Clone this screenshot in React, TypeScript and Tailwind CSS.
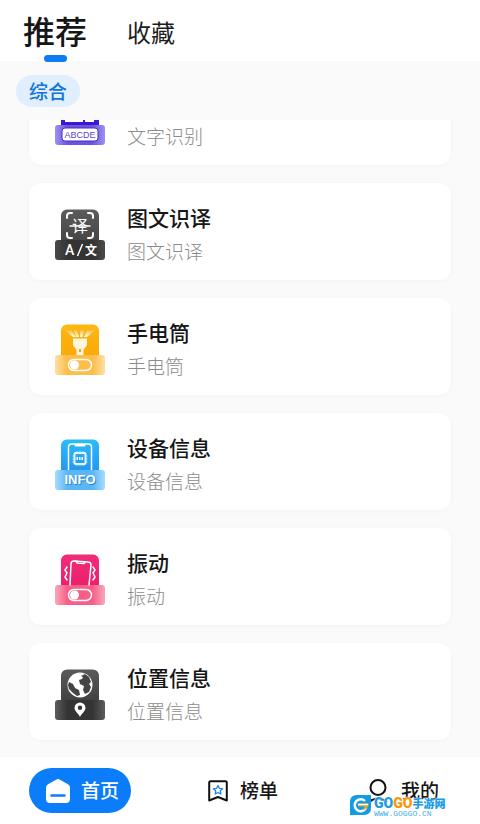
import type { ReactNode } from "react";

type Tool = {
  id: string;
  name: string;
  description: string;
  icon: ReactNode;
};

type IconBaseProps = {
  id: string;
  top: [string, string];
  edge: string;
  middle: string;
  children: ReactNode;
};

const IconBase = ({ id, top, edge, middle, children }: IconBaseProps) => (
  <svg viewBox="0 -1 50 54" className="h-[54px] w-[50px] shrink-0" aria-hidden="true">
    <defs>
      <linearGradient id={`${id}-top`} x1="0" y1="0" x2="0" y2="1">
        <stop offset="0" stopColor={top[0]} />
        <stop offset="1" stopColor={top[1]} />
      </linearGradient>
      <linearGradient id={`${id}-band`} x1="0" y1="0" x2="1" y2="0">
        <stop offset="0" stopColor={edge} />
        <stop offset="0.25" stopColor={middle} />
        <stop offset="0.75" stopColor={middle} />
        <stop offset="1" stopColor={edge} />
      </linearGradient>
    </defs>
    <path
      d="M6 34V7.500a6 6 0 0 1 6-6h26a6 6 0 0 1 6 6V34z"
      fill={`url(#${id}-top)`}
    />
    <rect y="32" width="50" height="20" rx="3" fill={`url(#${id}-band)`} />
    {children}
  </svg>
);

const SwitchGlyph = () => (
  <g>
    <rect x="13.500" y="36.500" width="23" height="11" rx="5.500" fill="none" stroke="#fff" strokeWidth="1.500" />
    <circle cx="19.500" cy="42" r="4.500" fill="#fff" />
  </g>
);

const TextScanIcon = () => (
  <IconBase id="scan" top={["#5b3cf0", "#3a12cf"]} edge="#9e92f0" middle="#6a55e0">
    <path d="M10 20h18v9H10zM30 20h9v9h-9z" fill="#fff" />
    <rect x="7" y="35" width="36" height="13" rx="3" fill="#fff" stroke="#4630bd" />
    <text x="25" y="45" textAnchor="middle" fontSize="9" className="fill-[#5b48cf] font-['Liberation_Sans',sans-serif]">
      ABCDE
    </text>
  </IconBase>
);

const TranslateIcon = () => (
  <IconBase id="translate" top={["#5c5c5c", "#444444"]} edge="#4a4a4a" middle="#343434">
    <g fill="none" stroke="#fff" strokeWidth="2" strokeLinecap="round">
      <path d="M12 10V8a3 3 0 0 1 3-3h2M33 5h2a3 3 0 0 1 3 3v2M12 25v2a3 3 0 0 0 3 3h2M33 30h2a3 3 0 0 0 3-3v-2" />
      <path d="M15 18h20" strokeWidth="1.500" />
    </g>
    <text x="25" y="23.500" textAnchor="middle" fontSize="16" className="fill-white font-['Noto_Sans_CJK_SC',sans-serif]">
      译
    </text>
    <text x="10" y="47" fontSize="14" className="fill-white font-['Roboto',sans-serif] font-medium">
      A
    </text>
    <path d="m22.500 48 5-12" stroke="#fff" strokeWidth="1.500" />
    <text x="30" y="46.500" fontSize="12" className="fill-white font-['Noto_Sans_CJK_SC',sans-serif] font-bold">
      文
    </text>
  </IconBase>
);

const TorchIcon = () => (
  <IconBase id="torch" top={["#fcb813", "#fba806"]} edge="#fde0a2" middle="#fcbd49">
    <defs>
      <linearGradient id="torch-beam" x1="0" y1="0" x2="0" y2="1">
        <stop offset="0" stopColor="#fff" stopOpacity="0.1" />
        <stop offset="1" stopColor="#fff" />
      </linearGradient>
    </defs>
    <path
      d="m10 7 8 7h3l-5-7zM18 7l3.500 7H24l-2-7zM25 7v7h2.500l2-7zM32 7l-3 7h3l8-7z"
      fill="url(#torch-beam)"
    />
    <path d="M18 15.500h14V21c0 3-3.500 4-3.500 7v4h-7v-4c0-3-3.500-4-3.500-7z" fill="#fff6dc" />
    <path d="M25 26v3" stroke="#f0a51a" strokeWidth="2" />
    <SwitchGlyph />
  </IconBase>
);

const DeviceIcon = () => (
  <IconBase id="device" top={["#2bbcf8", "#2396f0"]} edge="#a6dcfb" middle="#5ab6f5">
    <path d="M13.500 32V9a3 3 0 0 1 3-3h17a3 3 0 0 1 3 3v23" fill="none" stroke="#fff" strokeWidth="1.500" />
    <path d="M19 6h12l-1 2.500H20z" fill="#fff" />
    <rect x="19.500" y="15" width="11" height="11" rx="1" fill="none" stroke="#e8f8ff" strokeWidth="2" />
    <path d="M21.500 20.500h7" stroke="#fff" strokeWidth="3" strokeDasharray="1.500 1" />
    <path d="M22 13v2M25 13v2M28 13v2M22 26v2M25 26v2M28 26v2M17.500 18h2M17.500 21h2M17.500 24h2M30.500 18h2M30.500 21h2M30.500 24h2" stroke="#c9efff" />
    <text x="26" y="47" textAnchor="middle" fontSize="13" className="fill-[#2b87c8] font-['Liberation_Sans',sans-serif] font-bold">
      INFO
    </text>
    <text x="25" y="46" textAnchor="middle" fontSize="13" className="fill-white font-['Liberation_Sans',sans-serif] font-bold">
      INFO
    </text>
  </IconBase>
);

const VibrateIcon = () => (
  <IconBase id="vibrate" top={["#f02c78", "#ec1f6c"]} edge="#fba6b8" middle="#f65f88">
    <g fill="none" stroke="#fff" strokeWidth="1.500" strokeLinecap="round" strokeLinejoin="round">
      <path d="m15 32 1-21a3 3 0 0 1 3-3l14 1a3 3 0 0 1 3 3l-2 20" />
      <path d="m21 8 1 2 7 .5L30 9" />
      <path d="m12 14-2 3 2 3-2 4 2 3M38 14l2 3-2 3 2 4-2 3" />
    </g>
    <SwitchGlyph />
  </IconBase>
);

const LocationIcon = () => (
  <IconBase id="location" top={["#5a5a5a", "#404040"]} edge="#5c5c5c" middle="#343434">
    <circle cx="25" cy="17" r="12.500" fill="#fff" />
    <path
      d="M26 8l4-2 4 3 2 5-2 2 2 3-2 5-4 2-2-4 1-4-4-2-1-4 3-1 1-2-2-1zM14 14l4 2 2 4 4 2 1 5-3 1-4-3-4-4-1-4z"
      fill="#444"
    />
    <path
      fillRule="evenodd"
      d="M25 49c-2-4-5.500-6-5.500-9a5.500 5.500 0 0 1 11 0c0 3-3.500 5-5.500 9zM25 37.500a2.200 2.200 0 1 0 0 4.400 2.200 2.200 0 0 0 0-4.400z"
      fill="#fff"
    />
  </IconBase>
);

const tools: Tool[] = [
  { id: "scan", name: "文字识别", description: "文字识别", icon: <TextScanIcon /> },
  { id: "translate", name: "图文识译", description: "图文识译", icon: <TranslateIcon /> },
  { id: "torch", name: "手电筒", description: "手电筒", icon: <TorchIcon /> },
  { id: "device", name: "设备信息", description: "设备信息", icon: <DeviceIcon /> },
  { id: "vibrate", name: "振动", description: "振动", icon: <VibrateIcon /> },
  { id: "location", name: "位置信息", description: "位置信息", icon: <LocationIcon /> },
];

const ToolCard = ({ tool }: { tool: Tool }) => (
  <button
    type="button"
    className="flex h-[97px] w-full shrink-0 items-center gap-[22px] rounded-xl bg-white px-[26px] pt-1 text-left shadow-[0_1px_4px_rgba(0,0,0,0.03)]"
  >
    {tool.icon}
    <span className="flex flex-col gap-1.5">
      <span className="text-[21px] leading-7 font-medium text-[#161616]">{tool.name}</span>
      <span className="text-[19px] leading-7 font-light text-[#8c8c8c]">{tool.description}</span>
    </span>
  </button>
);

const Header = () => (
  <header className="h-[61px] shrink-0 bg-white px-[23px]">
    <nav className="flex items-start gap-10">
      <a href="#recommend" className="flex flex-col items-center pt-2.5 text-[32px] leading-10 font-medium text-[#161616]">
        推荐
        <span className="mt-[5px] h-[7px] w-[23px] rounded-full bg-[#0f7df2]" />
      </a>
      <a href="#favorites" className="pt-4 text-2xl leading-8 text-[#1c1c1c]">
        收藏
      </a>
    </nav>
  </header>
);

const HomeIcon = () => (
  <svg viewBox="0 0 24 24" className="size-6" aria-hidden="true">
    <path
      d="M10 .7Q12-.5 14 .7l8 4.500Q24 6.500 24 8.500V20a4 4 0 0 1-4 4H4a4 4 0 0 1-4-4V8.500q0-2 2-3.300z"
      fill="#fff"
    />
    <path d="M4.500 16.500h15" stroke="#0c7dfa" strokeWidth="2.500" />
  </svg>
);

const RankIcon = () => (
  <svg viewBox="0 0 20 22" className="h-[22px] w-5" aria-hidden="true">
    <path d="M1.200 2.500q0-1.300 1.300-1.300h15q1.300 0 1.300 1.300v18L10 17l-8.800 3.500z" fill="none" stroke="#111" strokeWidth="2" strokeLinejoin="round" />
    <path
      d="m10 5.500 1.400 2.800 3.100.4-2.200 2.200.5 3.100-2.800-1.500L7.200 14l.5-3.100-2.200-2.200 3.100-.4z"
      fill="none"
      stroke="#1683ee"
      strokeWidth="1.300"
      strokeLinejoin="round"
    />
  </svg>
);

const ProfileIcon = () => (
  <svg viewBox="0 0 22 24" className="h-6 w-[22px]" aria-hidden="true">
    <circle cx="11" cy="8.500" r="7.500" fill="none" stroke="#111" strokeWidth="2" />
    <path d="M2 23q9-7 18 0" fill="none" stroke="#111" strokeWidth="2" />
  </svg>
);

const Watermark = () => (
  <div className="pointer-events-none absolute bottom-[7px] left-[350px] flex items-start gap-[3px] whitespace-nowrap">
    <svg viewBox="0 0 21 20" className="h-5 w-[21px]" aria-hidden="true">
      <path d="M7 0h14v13q0 7-7 7H0V7q0-7 7-7z" fill="#129ce4" />
      <path d="M15 6a6 6 0 1 0 1 7" fill="none" stroke="#fff" strokeWidth="2.500" />
      <path d="M8 8.500h11q-1 6-7 7 3-2 3-4H8z" fill="#f7a11b" />
      <path d="M8 9.500h10" stroke="#fff" strokeWidth="1.500" />
    </svg>
    <div className="flex flex-col">
      <div className="flex items-center font-['Noto_Sans_CJK_SC',sans-serif] text-[11px] leading-4 font-black text-[#169be8] [text-shadow:0_0_1px_#fff,0_0_2px_#fff]">
        <span className="font-['Liberation_Sans_Narrow','Roboto',sans-serif] text-sm leading-4 font-black">GO</span>
        <span className="font-['Liberation_Sans_Narrow','Roboto',sans-serif] text-sm leading-4 font-black text-[#ff9408]">GO</span>
        手游网
      </div>
      <span className="font-['Liberation_Mono',monospace] text-[8px] leading-[6px] text-[#42aee8]">WWW.GOGGO.CN</span>
    </div>
  </div>
);

const BottomBar = () => (
  <footer className="relative h-[67px] shrink-0 bg-white px-[29px] pt-[11px]">
    <nav className="flex justify-between text-[19px] font-medium text-[#161616]">
      <a href="#home" className="flex h-[45px] w-[102px] items-center gap-[11px] rounded-full bg-[#0c7dfa] pl-[17px] text-white">
        <HomeIcon />
        首页
      </a>
      <a href="#rank" className="mr-3 flex h-[45px] items-center gap-3">
        <RankIcon />
        榜单
      </a>
      <a href="#profile" className="mr-3 flex h-[45px] items-center gap-3">
        <ProfileIcon />
        我的
      </a>
    </nav>
    <Watermark />
  </footer>
);

const App = () => (
  <div className="flex h-screen flex-col overflow-hidden bg-[#fafafa] font-['Noto_Sans_CJK_SC',sans-serif]">
    <Header />
    <div className="shrink-0 px-4 pt-[14px] pb-[13px]">
      <button type="button" className="h-8 w-16 rounded-full bg-[#e0eefe] text-[19px] leading-8 font-medium text-[#0f75d8]">
        综合
      </button>
    </div>
    <main className="flex min-h-0 flex-1 flex-col justify-end gap-[18px] overflow-hidden px-[29px] pb-[17px]">
      {tools.map((tool) => (
        <ToolCard key={tool.id} tool={tool} />
      ))}
    </main>
    <BottomBar />
  </div>
);

export default App;
